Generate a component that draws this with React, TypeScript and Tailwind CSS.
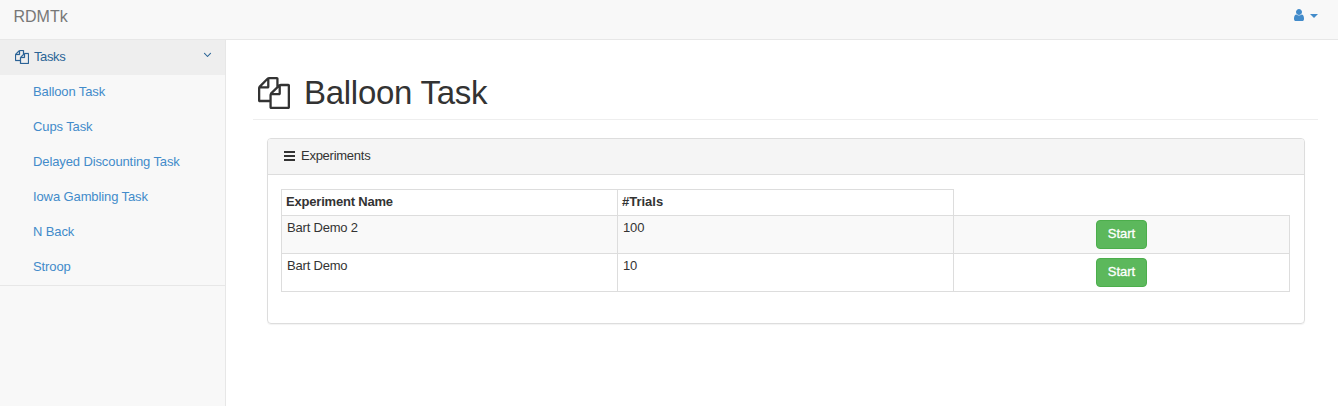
import React from "react";

const FILES =
  "M1696 384q40 0 68 28t28 68v1216q0 40-28 68t-68 28h-960q-40 0-68-28t-28-68v-288h-544q-40 0-68-28t-28-68v-672q0-40 20-88t48-76l408-408q28-28 76-48t88-20h416q40 0 68 28t28 68v328q68-40 128-40h416zm-544 213l-299 299h299v-299zm-640-384l-299 299h299v-299zm196 647l316-316v-416h-384v416q0 40-28 68t-68 28h-416v640h512v-256q0-40 20-88t48-76zm956 804v-1152h-384v416q0 40-28 68t-68 28h-416v640h896z";
const USER =
  "M1536 1399q0 109-62.5 187t-150.5 78h-854q-88 0-150.5-78t-62.5-187q0-85 8.5-160.5t31.5-152 58.5-131 94-89 134.5-34.5q131 128 313 128t313-128q76 0 134.5 34.5t94 89 58.5 131 31.5 152 8.5 160.5zm-256-887q0 159-112.5 271.5t-271.5 112.5-271.5-112.5-112.5-271.5 112.5-271.5 271.5-112.5 271.5 112.5 112.5 271.5z";
const ANGLE_DOWN =
  "M1395 736q0 13-10 23l-466 466q-10 10-23 10t-23-10l-466-466q-10-10-10-23t10-23l50-50q10-10 23-10t23 10l393 393 393-393q10-10 23-10t23 10l50 50q10 10 10 23z";

function Icon({ path, className }: { path: string; className: string }) {
  return (
    <svg viewBox="0 0 1792 1792" fill="currentColor" className={className}>
      <path d={path} />
    </svg>
  );
}

const tasks = ["Balloon Task", "Cups Task", "Delayed Discounting Task", "Iowa Gambling Task", "N Back", "Stroop"];
const experiments = [
  { name: "Bart Demo 2", trials: 100 },
  { name: "Bart Demo", trials: 10 },
];

export default function App() {
  return (
    <div className="flex h-[406px] flex-col overflow-hidden bg-white font-['Liberation_Sans',Arial,sans-serif] text-[13px] leading-[18px] tracking-[-0.11px] text-[#333]">
      <header className="flex h-10 shrink-0 justify-between border-b border-[#e7e7e7] bg-[#f8f8f8] pl-[13.5px] pr-5">
        <span className="pt-2 text-base leading-[18px] tracking-normal text-[#777]">RDMTk</span>
        <div className="flex items-start gap-[4px] pt-[8px] text-[#428bca]">
          <Icon path={USER} className="size-[14px]" />
          <svg viewBox="0 0 8 4" fill="currentColor" className="mt-[6px] h-1 w-2">
            <path d="M0 0h8L4 4z" />
          </svg>
        </div>
      </header>
      <div className="flex min-h-0 flex-1">
        <nav className="w-[226px] shrink-0 border-r border-[#e7e7e7] bg-[#f8f8f8] text-[#428bca]">
          <div className="flex h-[35px] items-start bg-[#eee] pl-[15px] pr-[11px] pt-2 text-[#2a6496]">
            <Icon path={FILES} className="mt-[2px] size-[14px] stroke-current [stroke-width:30]" />
            <span className="ml-[5px] tracking-[-0.4px]">Tasks</span>
            <Icon path={ANGLE_DOWN} className="ml-auto size-[13px]" />
          </div>
          <ul className="border-b border-[#e7e7e7]">
            {tasks.map((task) => (
              <li key={task} className="h-[35px] pl-[33px] pt-2">
                {task}
              </li>
            ))}
          </ul>
        </nav>
        <main className="flex-1 pl-[27px] pr-5">
          <h1 className="flex h-20 items-start border-b border-[#eee] pl-[5px] pt-[35px] text-[33px] leading-[36px] tracking-[-0.28px]">
            <Icon path={FILES} className="mt-[2px] h-8 w-[32px]" />
            <span className="ml-[14px]">Balloon Task</span>
          </h1>
          <section className="ml-[14px] mr-[13px] mt-[18px] h-[186px] rounded border border-[#ddd] shadow-[0_1px_1px_rgba(0,0,0,0.05)]">
            <div className="flex h-9 items-start rounded-t-[3px] border-b border-[#ddd] bg-[#f5f5f5] pl-4 pt-2">
              <svg viewBox="0 0 11 10" fill="currentColor" shapeRendering="crispEdges" className="mt-1 h-[10px] w-[11px]">
                <path d="M0 0h11v2H0zM0 4h11v2H0zM0 8h11v2H0z" />
              </svg>
              <span className="ml-[6px] tracking-[-0.26px]">Experiments</span>
            </div>
            <table className="ml-[13px] mt-[14px] w-[1009px] table-fixed border-collapse">
              <thead>
                <tr className="h-[26px]">
                  <th className="border border-[#ddd] px-1 pb-1 pt-[3px] text-left align-top font-bold tracking-[-0.2px]">Experiment Name</th>
                  <th className="border border-[#ddd] px-1 pb-1 pt-[3px] text-left align-top font-bold tracking-normal">#Trials</th>
                  <td />
                </tr>
              </thead>
              <tbody>
                {experiments.map((e) => (
                  <tr key={e.name} className="h-[38px] odd:bg-[#f9f9f9]">
                    <td className="border border-[#ddd] px-[5px] pt-[3px] align-top tracking-[-0.2px]">{e.name}</td>
                    <td className="border border-[#ddd] px-[5px] pt-[3px] align-top">{e.trials}</td>
                    <td className="border border-[#ddd] p-0 pt-1 text-center align-top">
                      <button className="mx-auto block h-[29px] w-[51px] rounded border border-[#4cae4c] bg-[#5cb85c] pb-[2px] text-[13px] leading-[18px] tracking-normal text-white [-webkit-text-stroke:0.3px_white]">
                        Start
                      </button>
                    </td>
                  </tr>
                ))}
              </tbody>
            </table>
          </section>
        </main>
      </div>
    </div>
  );
}
